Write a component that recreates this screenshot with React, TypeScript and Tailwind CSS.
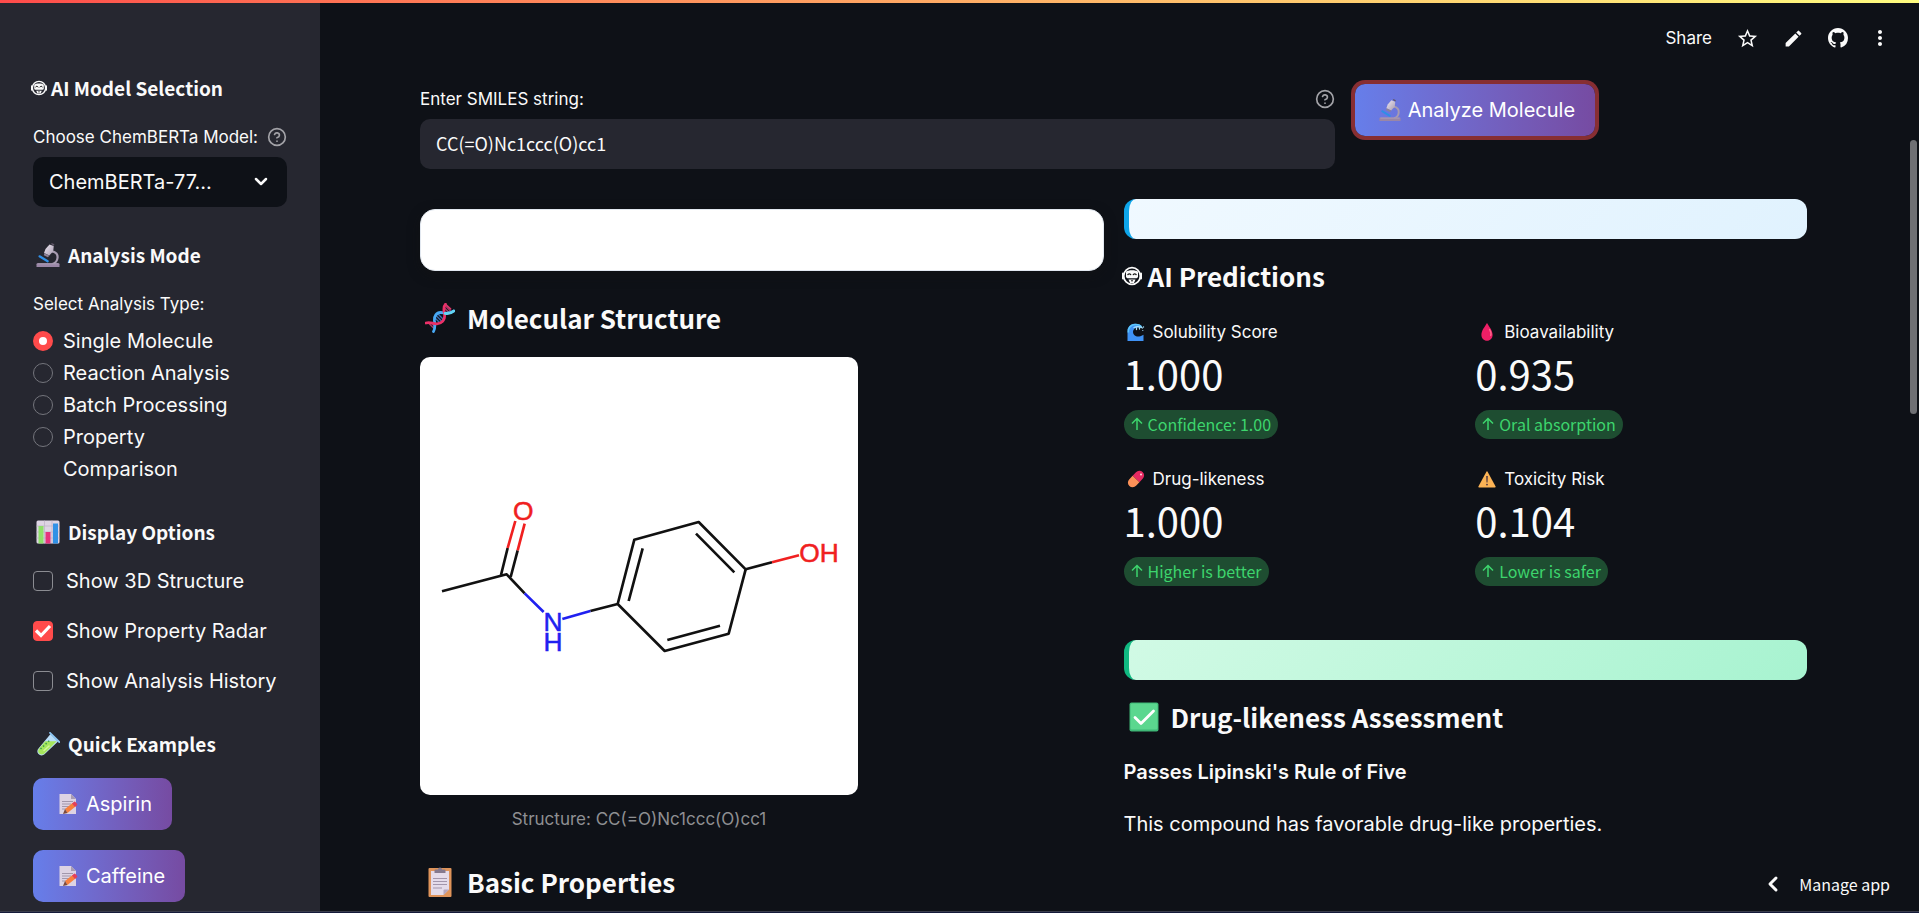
import React, { useState } from "react";
import { MdStarOutline, MdEdit, MdMoreVert } from "react-icons/md";
import { FiHelpCircle, FiChevronLeft } from "react-icons/fi";

const display = "font-['Noto_Sans_CJK_SC',sans-serif]";

type IconProps = { className?: string };

function GithubMark({ className = "" }: IconProps) {
  return (
    <svg viewBox="0 0 16 16" fill="currentColor" className={className} aria-hidden="true">
      <path
        fillRule="evenodd"
        d="M8 0C3.580 0 0 3.580 0 8c0 3.540 2.290 6.530 5.470 7.590.4.070.550-.170.550-.380 0-.190-.010-.820-.010-1.490-2.010.370-2.530-.490-2.690-.940-.090-.230-.480-.940-.820-1.130-.280-.150-.680-.520-.010-.530.630-.010 1.080.580 1.230.820.720 1.210 1.870.870 2.330.660.070-.520.280-.870.510-1.070-1.780-.200-3.640-.890-3.640-3.950 0-.870.310-1.590.820-2.150-.080-.200-.360-1.020.080-2.120 0 0 .670-.210 2.200.820.640-.180 1.320-.270 2-.270.680 0 1.360.090 2 .270 1.530-1.040 2.200-.820 2.200-.820.440 1.100.160 1.920.080 2.120.510.560.820 1.270.820 2.150 0 3.070-1.870 3.750-3.650 3.950.290.250.540.730.540 1.480 0 1.070-.010 1.930-.010 2.200 0 .210.150.460.550.380A8.013 8.013 0 0 0 16 8c0-4.420-3.580-8-8-8z"
      />
    </svg>
  );
}

function Robot({ className = "" }: IconProps) {
  return (
    <svg viewBox="0 0 20 20" className={"-ml-0.5 shrink-0 " + className} aria-hidden="true">
      <circle cx="10" cy="10" r="8.3" fill="none" stroke="currentColor" strokeWidth="1.7" />
      <path d="M1 7.5v5M19 7.5v5" stroke="currentColor" strokeWidth="2" strokeLinecap="round" />
      <path d="M4 5.8C6 3.8 14 3.8 16 5.8v4.4c0 1.4-1 2-2.2 2H6.2C5 12.2 4 11.6 4 10.2Z" fill="currentColor" />
      <path d="M5.6 9.2c.5-1.8 2.9-1.8 3.4 0M11 9.2c.5-1.8 2.9-1.8 3.4 0" fill="none" stroke="#111" strokeWidth="1.2" />
      <path d="M6.5 13.5h7l-1.5 3.5H8z" fill="currentColor" />
      <path d="M9 14.8h2" stroke="#111" strokeWidth="1" />
    </svg>
  );
}

function Microscope({ className = "" }: IconProps) {
  return (
    <svg viewBox="0 0 24 24" className={"shrink-0 " + className} aria-hidden="true">
      <defs>
        <linearGradient id="tube" x1="0" y1="0" x2="1" y2="1">
          <stop offset="0" stopColor="#efe9f3" />
          <stop offset="1" stopColor="#a79bb0" />
        </linearGradient>
      </defs>
      <path d="M15.5 8.5c4.5 0 6.5 3 6 6.5-.3 2.8-2 5-5 6" fill="none" stroke="#a79bb0" strokeWidth="2.2" />
      <path d="m9.500 6 4-4.600 4.200 1.600-.4 5.200-4 4.300-5.300-2.400z" fill="url(#tube)" />
      <path d="m8.300 10.200 5.200 2.600-1.700 1.500-4-2z" fill="#8d8196" />
      <path d="m15 1 .8-1 2.600 1.300-.5 1.400z" fill="#5f5668" />
      <path d="m3.500 13.300 8.200 5" stroke="#2f8fe6" strokeWidth="2.2" strokeLinecap="round" />
      <path d="M1.500 20.300h21q1 0 1 1V24H.5v-2.700q0-1 1-1z" fill="#9a86a6" />
      <path d="M1.500 20.800h21" stroke="#b6a8bf" strokeWidth=".8" />
    </svg>
  );
}

function BarChart({ className = "" }: IconProps) {
  return (
    <svg viewBox="0 0 24 24" className={"shrink-0 " + className} aria-hidden="true">
      <rect x=".5" y=".5" width="23" height="23" rx="1.5" fill="#ded5e4" />
      <path d="M.5 6h23M.5 12h23M.5 18h23M8.5.5v23M16 .5v23" stroke="#bdb2c6" strokeWidth=".7" />
      <path d="M2.5 6h5v17.5h-5z" fill="#8fe06a" />
      <path d="M9.5 12h5v11.5h-5z" fill="#e6337d" />
      <path d="M17 3.5h5v20h-5z" fill="#3191e6" />
    </svg>
  );
}

function TestTube({ className = "" }: IconProps) {
  return (
    <svg viewBox="0 0 24 24" className={"shrink-0 " + className} aria-hidden="true">
      <path d="M14.500 2 22 9.500 8.500 22.300c-1.600 1.500-4.400 1.500-6-.2-1.600-1.600-1.500-4.200 0-5.700z" fill="#b9ddf8" />
      <path d="M9.300 9.300h11.400L8.500 21.500c-1.500 1.400-3.900 1.400-5.300 0s-1.400-3.700 0-5.100z" fill="#a6e65c" />
      <path d="m4.500 17 9-8.500" stroke="#3d9e4c" strokeWidth="1.5" strokeDasharray="1.5 2" />
      <path d="m14 .8 9.300 9.200" stroke="#8cc6f3" strokeWidth="1.8" strokeLinecap="round" />
      <path d="m8 18.500 5-4.500" stroke="#d0f799" strokeWidth="1.5" strokeLinecap="round" />
    </svg>
  );
}

function Memo({ className = "" }: IconProps) {
  return (
    <svg viewBox="0 0 20 22" className={"shrink-0 " + className} aria-hidden="true">
      <path d="M1.500 1h11.500l5 5v15H1.500z" fill="#ddd3e3" />
      <path d="M13 1v5h5z" fill="#a99cb3" />
      <path d="M4 8.500h11M4 11h9M4 13.500h7M4 16h4" stroke="#a297ab" strokeWidth="1" />
      <path d="m7 16 7.500-6 3 3.500L9.500 20z" fill="#f9803c" />
      <path d="m14 10.400 1.800-1.500q1-.7 1.900.3l1.300 1.500q.8 1-.2 1.800l-1.800 1.500z" fill="#e3405c" />
      <path d="M7 16 5 21l4.500-1z" fill="#7d4b3d" />
    </svg>
  );
}

function Dna({ className = "" }: IconProps) {
  return (
    <svg viewBox="0 0 30 30" className={"shrink-0 " + className} aria-hidden="true">
      <g fill="none" strokeLinecap="round">
        <path d="M4 20.500 9.500 26M7 20.500l3 3.500M19.500 5l4.500 4.500M20.500 3l6 6" stroke="#a83a68" strokeWidth="1.4" />
        <path d="m11 12.500 6.500 6.500M12.500 10.500l6.500 6.500M10.500 15.500l4.500 4.500" stroke="#3a6fb5" strokeWidth="1.4" />
        <path d="M8.500 28.500C10.500 25.500 10 22 9.500 18 9 13 11.500 9.500 15.500 9.500c4.500 0 8.500 2.500 13.300-1.500" stroke="#48a9f5" strokeWidth="2.8" />
        <path d="M1 20c4-1.500 7 1 11 .8 5-.3 8-3.800 7.600-8.800C19.300 8 17.500 4.500 20.500 1.300" stroke="#ec3068" strokeWidth="2.8" />
        <path d="M20 10.300c3 .5 6 .2 8.800-2.300" stroke="#62d4f4" strokeWidth="2.8" />
        <path d="m20.500 1.300 5 4.500" stroke="#d9366a" strokeWidth="1.8" />
      </g>
    </svg>
  );
}

function Clipboard({ className = "" }: IconProps) {
  return (
    <svg viewBox="0 0 30 30" className={"shrink-0 " + className} aria-hidden="true">
      <rect x="3.5" y="1" width="23" height="29" rx="1" fill="#df945a" />
      <path d="M6 4h18v18.500L18.500 28H6z" fill="#e4dcea" />
      <path d="M24 22.500 18.500 28v-4.500q0-1 1-1z" fill="#b4a6be" />
      <path d="M8 11.500h14M8 14.500h14M8 17.500h14M8 21h9" stroke="#a296ab" strokeWidth="1" />
      <path d="M9.500 6V3.500q0-1 1-1h2.500q0-2 2-2t2 2h2.500q1 0 1 1V6z" fill="#857a8e" />
    </svg>
  );
}

function CheckMark({ className = "" }: IconProps) {
  return (
    <svg viewBox="0 0 30 30" className={"shrink-0 " + className} aria-hidden="true">
      <rect x=".5" y=".5" width="29" height="29" rx="2" fill="#3fb877" />
      <rect x="1.5" y="1.5" width="27" height="26" rx="1.5" fill="#5bd78f" />
      <path d="m6 15.500 6 6L24.500 9" fill="none" stroke="#fff" strokeWidth="2.8" strokeLinecap="round" strokeLinejoin="round" />
    </svg>
  );
}

function Wave({ className = "" }: IconProps) {
  return (
    <svg viewBox="0 0 18 18" className={"shrink-0 " + className} aria-hidden="true">
      <path
        d="M.5 18V8C.5 3.500 4 .8 8.500.8c3 0 5.500 1 6.500 3.200l-3 .5C8.500 4 6 6 6 8.800c0 3.200 3 5.200 6 4.700 2-.3 3.300-1 4.500-1.800V18z"
        fill="#3f92f5"
      />
      <path d="M1.300 9.500C1 4.500 4 1.500 8.500 1.500c3 0 5 .8 6 2.500" fill="none" stroke="#5cc6fa" strokeWidth="1.6" />
      <path d="M7 4.500q4-2 8.500.5M9.500 6.500v-2M12.500 6V4" stroke="#a8dffb" strokeWidth="1.3" fill="none" strokeLinecap="round" />
      <circle cx="16.5" cy="4" r=".7" fill="#a8dffb" />
      <circle cx="15.8" cy="7.5" r=".6" fill="#a8dffb" />
    </svg>
  );
}

function Drop({ className = "" }: IconProps) {
  return (
    <svg viewBox="0 0 18 18" className={"shrink-0 " + className} aria-hidden="true">
      <path d="M9 0c2 3.500 5.600 7.500 5.600 11.800 0 3.500-2.400 6-5.600 6s-5.600-2.500-5.600-6C3.400 7.500 7 3.500 9 0z" fill="#ee1f66" />
      <path d="M11.500 6.500c1.500 2.500 1.800 4.500 1.200 6" stroke="#ff6a8d" strokeWidth="1.3" fill="none" strokeLinecap="round" />
    </svg>
  );
}

function Pill({ className = "" }: IconProps) {
  return (
    <svg viewBox="0 0 18 18" className={"shrink-0 " + className} aria-hidden="true">
      <g transform="rotate(-47 9 9)">
        <path d="M9 4.300h5a4.700 4.700 0 0 1 0 9.400H9z" fill="#e62a62" />
        <path d="M9 4.300H4a4.700 4.700 0 0 0 0 9.400H9z" fill="#fb9158" />
      </g>
      <circle cx="14" cy="4.5" r="1" fill="#ffd9e2" />
    </svg>
  );
}

function Warning({ className = "" }: IconProps) {
  return (
    <svg viewBox="0 0 18 18" className={"shrink-0 " + className} aria-hidden="true">
      <path d="M8.400 1.800q.6-1 1.200 0L17.600 16.600q.3.800-.5.800H.9q-.8 0-.5-.8z" fill="#fbb355" />
      <path d="M8.200 6h1.600l-.3 6.500h-1z" fill="#4a3440" />
      <circle cx="9" cy="14.6" r=".9" fill="#4a3440" />
    </svg>
  );
}

function Molecule() {
  return (
    <svg viewBox="60 -279 1314 1314" className="block w-full" role="img" aria-label="Paracetamol structure">
      <g fill="none" stroke="#111" strokeWidth="8" strokeLinejoin="round">
        <path d="M126 424 320 373 374 430" />
        <path d="M303 375 323 294M332 381 353 301" />
        <path d="M571 483 653 462 703 269 896 216 1037 358 986 551 794 603 653 462" />
        <path d="M686 453 728 295M888 251 1003 367M960 527 802 570" />
        <path d="M1037 358 1116 337" />
      </g>
      <g fill="none" stroke="#f02020" strokeWidth="8">
        <path d="M323 294 346 213M353 301 374 221M1116 337 1197 316" />
      </g>
      <g fill="none" stroke="#2020f0" strokeWidth="8">
        <path d="M374 430 431 486M487 507 571 483" />
      </g>
      <g className="font-['Liberation_Sans',sans-serif]" fontSize="79">
        <text x="370" y="209" textAnchor="middle" fill="#f02020" stroke="#f02020" strokeWidth="1.5">O</text>
        <text x="1198" y="336" fill="#f02020" stroke="#f02020" strokeWidth="1.5">OH</text>
        <text textAnchor="middle" fill="#2020f0" stroke="#2020f0" strokeWidth="1.5">
          <tspan x="459" y="543">N</tspan>
          <tspan x="459" y="604">H</tspan>
        </text>
      </g>
    </svg>
  );
}

function SideHeading({ icon, children }: { icon?: React.ReactNode; children: React.ReactNode }) {
  return (
    <h3 className={`flex items-center text-[19px] leading-7 font-bold whitespace-nowrap text-[#fafafa] ${display} ${icon ? "gap-2 pl-[3px]" : "gap-1"}`}>
      {icon ?? <Robot className="size-4" />}
      {children}
    </h3>
  );
}

function MainHeading({ icon, children }: { icon?: React.ReactNode; children: React.ReactNode }) {
  return (
    <h2 className={`flex items-center text-[26px] leading-8 font-bold text-[#fafafa] ${display} ${icon ? "gap-3 pl-[5px]" : "gap-1.5"}`}>
      {icon ?? <Robot className="size-5" />}
      {children}
    </h2>
  );
}

const gradientButton =
  "flex h-[52px] items-center gap-[7px] rounded-[10px] bg-linear-to-r from-[#667eea] to-[#764ba2] pr-5 pl-6 text-[20px] text-white";

const modes = ["Single Molecule", "Reaction Analysis", "Batch Processing", "Property Comparison"];

function Sidebar() {
  const [mode, setMode] = useState(modes[0]);
  const [shown, setShown] = useState<Record<string, boolean>>({
    "Show 3D Structure": false,
    "Show Property Radar": true,
    "Show Analysis History": false,
  });
  return (
    <aside className="w-80 shrink-0 overflow-hidden bg-[#262730] px-[33px] pt-[71px]">
      <SideHeading>AI Model Selection</SideHeading>
      <div className="mt-[23px] flex items-center justify-between">
        <label htmlFor="model" className="text-[17px] leading-6 whitespace-nowrap">Choose ChemBERTa Model:</label>
        <FiHelpCircle className="size-5 shrink-0 text-[#a3a3a8]" />
      </div>
      <div className="relative mt-2">
        <select id="model" className="h-[50px] w-full appearance-none rounded-[10px] bg-[#0e1117] pr-10 pl-4 text-[20px] text-[#fafafa]">
          <option>ChemBERTa-77...</option>
        </select>
        <svg viewBox="0 0 24 24" className="pointer-events-none absolute top-3 right-3.5 size-6" aria-hidden="true">
          <path d="m7 10 5 5 5-5" fill="none" stroke="currentColor" strokeWidth="2.5" strokeLinecap="round" strokeLinejoin="round" />
        </svg>
      </div>

      <div className="mt-[34px]">
        <SideHeading icon={<Microscope className="size-6" />}>Analysis Mode</SideHeading>
      </div>
      <fieldset className="mt-[23px]">
        <legend className="mb-[9px] text-[17px] leading-6">Select Analysis Type:</legend>
        {modes.map((m) => (
          <label key={m} className="flex w-[200px] gap-2.5 text-[20px] leading-8">
            <input
              type="radio"
              name="mode"
              checked={mode === m}
              onChange={() => setMode(m)}
              className="mt-1.5 size-5 shrink-0 appearance-none rounded-full border border-[#74757c] bg-[#262730] checked:border-[6px] checked:border-[#ff4b4b] checked:bg-white"
            />
            <span>{m}</span>
          </label>
        ))}
      </fieldset>

      <div className="mt-[33px]">
        <SideHeading icon={<BarChart className="size-6" />}>Display Options</SideHeading>
      </div>
      <div className="mt-[19px] flex flex-col gap-[18px]">
        {Object.keys(shown).map((name) => (
          <label key={name} className="flex items-center gap-[13px] text-[20px] leading-8 whitespace-nowrap">
            <span className="relative flex">
              <input
                type="checkbox"
                checked={shown[name]}
                onChange={() => setShown({ ...shown, [name]: !shown[name] })}
                className="size-5 appearance-none rounded-[4px] border border-[#8b8c92] checked:border-[#ff4b4b] checked:bg-[#ff4b4b]"
              />
              {shown[name] && (
                <svg viewBox="0 0 20 20" className="pointer-events-none absolute inset-0" aria-hidden="true">
                  <path d="m3 9.500 5 5 9-9.500" fill="none" stroke="#fff" strokeWidth="3.2" />
                </svg>
              )}
            </span>
            {name}
          </label>
        ))}
      </div>

      <div className="mt-[33px]">
        <SideHeading icon={<TestTube className="size-6" />}>Quick Examples</SideHeading>
      </div>
      <div className="mt-5 flex flex-col items-start gap-5">
        {["Aspirin", "Caffeine"].map((name) => (
          <button key={name} type="button" className={gradientButton}>
            <Memo className="size-[22px]" />
            {name}
          </button>
        ))}
      </div>
    </aside>
  );
}

function Metric({ icon, label, value, note }: { icon: React.ReactNode; label: string; value: string; note: string }) {
  return (
    <div>
      <div className="flex items-center gap-2 pl-[3px] text-[17px] leading-6">
        {icon}
        {label}
      </div>
      <div className={`mt-[5px] text-[40px] leading-[48px] text-[#fafafa] ${display}`}>{value}</div>
      <div className={`mt-[13px] flex h-[29px] w-fit items-center gap-[5px] rounded-full bg-[#1e4d31] px-[7px] pb-0.5 text-[16px] leading-none text-[#3dd56d] ${display}`}>
        <svg viewBox="0 0 12 14" className="h-3.5 w-3" aria-hidden="true">
          <path d="M6 13V1.500M1 6.500l5-5 5 5" fill="none" stroke="currentColor" strokeWidth="1.5" />
        </svg>
        {note}
      </div>
    </div>
  );
}

export default function App() {
  const [smiles, setSmiles] = useState("CC(=O)Nc1ccc(O)cc1");
  return (
    <div className="relative flex h-screen flex-col overflow-hidden bg-[#0e1117] font-['Inter',sans-serif] text-[#fafafa]">
      <div className="h-[3px] shrink-0 bg-linear-to-r from-[#ff4b4b] to-[#fffd80]" />
      <div className="flex min-h-0 flex-1">
        <Sidebar />
        <main className="min-w-0 flex-1 overflow-hidden">
          <header className="flex h-[81px] items-start justify-end gap-6 pt-[23px] pr-[27px]">
            <button type="button" className="text-[17px] leading-6">Share</button>
            <button type="button" aria-label="Favorite" className="flex h-6 items-center"><MdStarOutline className="size-[23px]" /></button>
            <button type="button" aria-label="Edit" className="flex h-6 items-center"><MdEdit className="size-[21px]" /></button>
            <button type="button" aria-label="GitHub" className="flex h-6 items-center"><GithubMark className="size-5" /></button>
            <button type="button" aria-label="More options" className="-ml-1 flex h-6 items-center"><MdMoreVert className="size-6" /></button>
          </header>

          <div className="mr-28 ml-25">
            <div className="flex gap-5">
              <div className="flex-[1_1_calc(66.67%-20px)]">
                <div className="mb-[5px] flex h-[30px] items-center justify-between">
                  <label htmlFor="smiles" className="text-[17px] leading-6">Enter SMILES string:</label>
                  <FiHelpCircle className="size-5 text-[#a3a3a8]" />
                </div>
                <input
                  id="smiles"
                  type="text"
                  value={smiles}
                  onChange={(e) => setSmiles(e.target.value)}
                  className={`h-[50px] w-full rounded-[10px] bg-[#262730] px-4 pb-0.5 text-[18px] text-[#fafafa] outline-none ${display}`}
                />
              </div>
              <div className="flex-[1_1_calc(33.33%-20px)]">
                <button type="button" className={`${gradientButton} ring-4 ring-[#872e32]`}>
                  <Microscope className="size-[22px]" />
                  Analyze Molecule
                </button>
              </div>
            </div>

            <div className="mt-[30px] flex gap-5">
              <section className="min-w-0 flex-1">
                <div className="mt-2.5 h-[62px] rounded-[15px] border border-[#e2e8f0] bg-white shadow-[0_4px_12px_rgba(17,17,17,0.5)]" />
                <div className="mt-[31px]">
                  <MainHeading icon={<Dna className="size-[30px]" />}>Molecular Structure</MainHeading>
                </div>
                <figure className="mt-[23px] w-[438px]">
                  <div className="overflow-hidden rounded-[10px] bg-white">
                    <Molecule />
                  </div>
                  <figcaption className="mt-3 text-center text-[17px] leading-6 text-[#8e8f92]">Structure: CC(=O)Nc1ccc(O)cc1</figcaption>
                </figure>
                <div className="mt-[35px]">
                  <MainHeading icon={<Clipboard className="size-[30px]" />}>Basic Properties</MainHeading>
                </div>
              </section>

              <section className="min-w-0 flex-1">
                <div className="h-10 rounded-[12px] border-l-[5px] border-[#0ea5e9] bg-linear-135 from-[#f0f9ff] to-[#e0f2fe]" />
                <div className="mt-[21px]">
                  <MainHeading>AI Predictions</MainHeading>
                </div>
                <div className="mt-7 grid grid-cols-2 gap-x-5 gap-y-7">
                  <Metric icon={<Wave className="size-[18px]" />} label="Solubility Score" value="1.000" note="Confidence: 1.00" />
                  <Metric icon={<Drop className="size-[18px]" />} label="Bioavailability" value="0.935" note="Oral absorption" />
                  <Metric icon={<Pill className="size-[18px]" />} label="Drug-likeness" value="1.000" note="Higher is better" />
                  <Metric icon={<Warning className="size-[18px]" />} label="Toxicity Risk" value="0.104" note="Lower is safer" />
                </div>
                <div className="mt-[54px] h-10 rounded-[12px] border-l-[5px] border-[#10b981] bg-linear-135 from-[#d1fae5] to-[#a7f3d0]" />
                <div className="mt-[21px]">
                  <MainHeading icon={<CheckMark className="size-[30px]" />}>Drug-likeness Assessment</MainHeading>
                </div>
                <p className="mt-[27px] text-[20px] leading-6 font-semibold">Passes Lipinski's Rule of Five</p>
                <p className="mt-7 text-[20px] leading-6">This compound has favorable drug-like properties.</p>
              </section>
            </div>
          </div>
        </main>
      </div>
      <div className="h-0.5 shrink-0 border-t border-[#3a3d4c] bg-[#141a3a]" />

      <div className="absolute top-[140px] right-0.5 h-[274px] w-[7px] rounded-full bg-[#6f7074]" />
      <button type="button" className={`absolute right-[29px] bottom-[17px] flex items-center gap-3.5 text-[16px] leading-6 ${display}`}>
        <FiChevronLeft className="size-6" strokeWidth={3} />
        Manage app
      </button>
    </div>
  );
}
